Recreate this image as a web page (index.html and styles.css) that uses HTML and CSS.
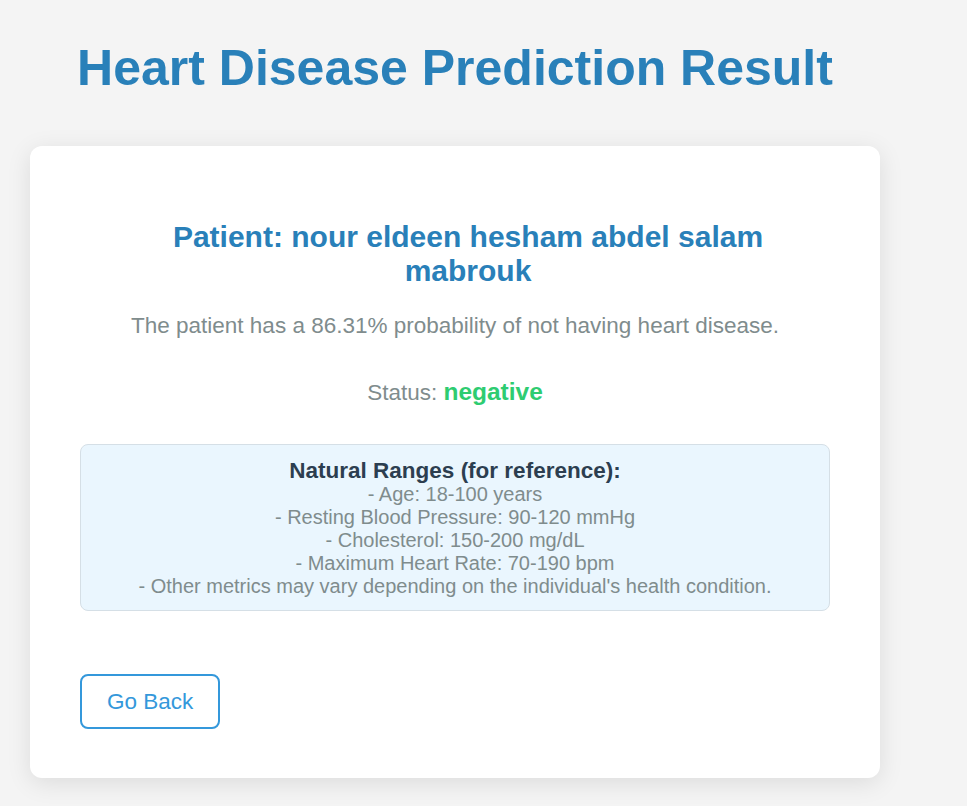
FILE: index.html
```html
<!DOCTYPE html>
<html lang="en">
<head>
<meta charset="utf-8">
<title>Heart Disease Prediction Result</title>
<link rel="stylesheet" href="styles.css">
</head>
<body>
<div class="page">
  <h1 class="title">Heart Disease Prediction Result</h1>
  <div class="card">
    <h2 class="patient">Patient: nour eldeen hesham abdel salam mabrouk</h2>
    <p class="prob">The patient has a 86.31% probability of not having heart disease.</p>
    <p class="status">Status: <span class="neg">negative</span></p>
    <div class="ranges">
      <div class="ranges-title">Natural Ranges (for reference):</div>
      <div>- Age: 18-100 years</div>
      <div>- Resting Blood Pressure: 90-120 mmHg</div>
      <div>- Cholesterol: 150-200 mg/dL</div>
      <div>- Maximum Heart Rate: 70-190 bpm</div>
      <div>- Other metrics may vary depending on the individual's health condition.</div>
    </div>
    <a class="back" href="#">Go Back</a>
  </div>
</div>
</body>
</html>
```
FILE: styles.css
```css
html, body {
  margin: 0;
  padding: 0;
  background: #f4f4f4;
  font-family: "Liberation Sans", Arial, sans-serif;
}
.page {
  width: 850px;
  margin-left: 30px;
  padding: 36px 0 40px;
}
.title {
  margin: 0 0 46px;
  text-align: center;
  color: #2980b9;
  font-size: 50px;
  line-height: 64px;
  font-weight: bold;
}
.card {
  background: #fff;
  border-radius: 12px;
  box-shadow: 0 5px 24px rgba(0,0,0,0.1);
  padding: 74px 50px 49px;
}
.patient {
  margin: 0 0 25px;
  padding: 0 50px 0 76px;
  text-align: center;
  color: #2980b9;
  font-size: 30px;
  line-height: 34px;
}
.prob {
  margin: 0;
  text-align: center;
  color: #7f8c8d;
  font-size: 22.5px;
  line-height: 26px;
}
.status {
  margin: 39px 0 37px;
  text-align: center;
  color: #7f8c8d;
  font-size: 22.5px;
  line-height: 28px;
}
.neg {
  color: #2ecc71;
  font-weight: bold;
  font-size: 24.5px;
}
.ranges {
  background: #eaf6fe;
  border: 1px solid #d5dfe6;
  border-radius: 8px;
  padding: 13px 10px 12px;
  text-align: center;
  color: #7f8c8d;
  font-size: 20px;
  line-height: 23px;
}
.ranges-title {
  color: #2c3e50;
  font-weight: bold;
  font-size: 22.5px;
  line-height: 25px;
}
.back {
  display: inline-block;
  margin-top: 63px;
  padding: 0 25px;
  height: 51px;
  line-height: 51px;
  border: 2px solid #3498db;
  border-radius: 8px;
  color: #3498db;
  font-size: 22.5px;
  text-decoration: none;
}
```
